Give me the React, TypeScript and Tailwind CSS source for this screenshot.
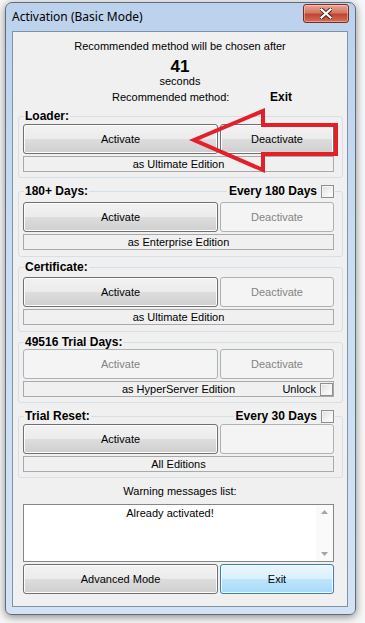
import type { ReactNode } from 'react';

const font = { fontFamily: '"Liberation Sans", Arial, sans-serif' };

type BtnKind = 'normal' | 'disabled' | 'focus';

function WinButton({ kind = 'normal', width, children }: { kind?: BtnKind; width: string; children?: ReactNode }) {
  const look =
    kind === 'disabled'
      ? 'border-[#adb2b5] bg-[#f4f4f4] text-[#838383]'
      : kind === 'focus'
        ? 'border-[#3c7fb1] bg-[linear-gradient(to_bottom,#eaf6fd_0%,#d9f0fc_50%,#bee6fd_50%,#a7d9f5_100%)] text-black shadow-[inset_0_0_0_1px_#f4fbfe]'
        : 'border-[#707070] bg-[linear-gradient(to_bottom,#f2f2f2_0%,#ebebeb_50%,#dddddd_50%,#cfcfcf_100%)] text-black shadow-[inset_0_0_0_1px_#fcfcfc]';
  return (
    <div className={`${width} h-[30px] flex items-center justify-center rounded-[3px] border text-[11px] ${look}`}>
      {children}
    </div>
  );
}

function CheckBox() {
  return (
    <div className="w-[13px] h-[13px] border border-[#8e8f8f] bg-[linear-gradient(135deg,#dcdcdc_0%,#f4f4f4_60%,#ffffff_100%)] shadow-[inset_0_0_0_1px_#f4f4f4]" />
  );
}

type GroupProps = {
  label: string;
  right?: string;
  top: string;
  pad: string;
  bottom: string;
  activate: BtnKind;
  deactivate: BtnKind;
  deactivateText?: string;
  edition: string;
  unlock?: boolean;
};

function Group({ label, right, top, pad, bottom, activate, deactivate, deactivateText = 'Deactivate', edition, unlock }: GroupProps) {
  return (
    <div className={`ml-[5px] w-[325px] ${top}`}>
      <div className="relative z-10 flex items-center justify-between h-[14px] pl-[6px] pr-[8px]">
        <span className="bg-[#f0f0f0] px-[1px] text-[12px] font-bold leading-[14px]">{label}</span>
        {right && (
          <span className="flex items-center gap-[4px] bg-[#f0f0f0] pl-[2px] pr-[1px]">
            <span className="text-[12px] font-bold leading-[14px]">{right}</span>
            <CheckBox />
          </span>
        )}
      </div>
      <div className={`-mt-[7px] border border-[#d5dfe5] rounded-[3px] pl-[4px] ${pad} ${bottom}`}>
        <div className="flex gap-[2px] w-[311px]">
          <WinButton kind={activate} width="w-[195px]">
            Activate
          </WinButton>
          <WinButton kind={deactivate} width="w-[114px]">
            {deactivateText}
          </WinButton>
        </div>
        <div className="mt-[2px] w-[311px] h-[16px] border border-[#a9a9a9] grid grid-cols-[1fr_auto_1fr] items-center text-[11px] leading-[13px]">
          <span />
          <span>{edition}</span>
          <span className="flex justify-end items-center gap-[4px] pr-[0px]">
            {unlock && (
              <>
                <span>Unlock</span>
                <CheckBox />
              </>
            )}
          </span>
        </div>
      </div>
    </div>
  );
}

export default function App() {
  return (
    <div className="relative w-[365px] h-[623px] bg-[#f7f7f7] overflow-hidden" style={font}>
      <div className="pl-[5px] pt-[2px]">
        <div className="w-[351px] h-[613px] flex flex-col rounded-t-[7px] rounded-b-[6px] border border-[#5f6d7e] bg-[linear-gradient(to_bottom,#bcd2ec_0%,#c9dcf1_40%,#d3e3f4_100%)] shadow-[0_2px_9px_rgba(0,0,0,0.45)]">
          {/* title bar */}
          <div className="h-[28px] flex items-start justify-between">
            <span className="pl-[6px] pt-[6px] text-[12px] leading-[16px] text-black" style={{ fontFamily: '"Noto Sans", "Open Sans", sans-serif' }}>
              Activation (Basic Mode)
            </span>
            <div className="mr-[6px] mt-[1px] w-[46px] h-[19px] rounded-[3px] border border-[#7a2a22] bg-[linear-gradient(to_bottom,#e8a695_0%,#d47764_45%,#c24430_55%,#d2715a_100%)] flex items-center justify-center shadow-[inset_0_0_0_1px_rgba(255,255,255,0.35)]">
              <svg width="12" height="11" viewBox="0 0 12 11">
                <path d="M1.5 1.5 L10.5 9.5 M10.5 1.5 L1.5 9.5" stroke="#4a1a14" strokeWidth="4" strokeLinecap="square" />
                <path d="M1.5 1.5 L10.5 9.5 M10.5 1.5 L1.5 9.5" stroke="#ffffff" strokeWidth="2.2" strokeLinecap="square" />
              </svg>
            </div>
          </div>

          {/* client area */}
          <div className="ml-[6px] w-[336px] h-[576px] border border-[#8092a8] bg-[#f0f0f0] flex flex-col text-black">
            <div className="pt-[8px] text-center text-[11px] leading-[13px]">Recommended method will be chosen after</div>
            <div className="mt-[6px] text-center text-[17px] font-bold leading-[16px]">41</div>
            <div className="text-center text-[11px] leading-[13px]">seconds</div>
            <div className="mt-[3px] flex pl-[99px] text-[11px] leading-[13px]">
              <span className="w-[158px]">Recommended method:</span>
              <span className="text-[12px] font-bold">Exit</span>
            </div>

            <Group label="Loader:" top="mt-[5px]" pad="pt-[7px]" bottom="pb-[5px]" activate="normal" deactivate="normal" edition="as Ultimate Edition" />
            <Group label="180+ Days:" right="Every 180 Days" top="mt-[6px]" pad="pt-[10px]" bottom="pb-[6px]" activate="normal" deactivate="disabled" edition="as Enterprise Edition" />
            <Group label="Certificate:" top="mt-[3px]" pad="pt-[9px]" bottom="pb-[6px]" activate="normal" deactivate="disabled" edition="as Ultimate Edition" />
            <Group label="49516 Trial Days:" top="mt-[3px]" pad="pt-[6px]" bottom="pb-[5px]" activate="disabled" deactivate="disabled" edition="as HyperServer Edition" unlock />
            <Group label="Trial Reset:" right="Every 30 Days" top="mt-[6px]" pad="pt-[7px]" bottom="pb-[5px]" activate="normal" deactivate="disabled" deactivateText="" edition="All Editions" />

            <div className="mt-[7px] text-center text-[11px] leading-[13px]">Warning messages list:</div>
            <div className="mt-[6px] ml-[10px] w-[311px] h-[58px] border border-[#828790] bg-white flex">
              <div className="flex-1 pt-[2px] text-center text-[11px] leading-[13px]">Already activated!</div>
              <div className="w-[17px] bg-[#fafafa] flex flex-col items-center justify-between py-[5px]">
                <svg width="7" height="4" viewBox="0 0 7 4">
                  <path d="M0 4 L3.5 0 L7 4 Z" fill="#a3a3a3" />
                </svg>
                <svg width="7" height="4" viewBox="0 0 7 4">
                  <path d="M0 0 L7 0 L3.5 4 Z" fill="#a3a3a3" />
                </svg>
              </div>
            </div>

            <div className="mt-[2px] ml-[10px] flex gap-[2px] w-[311px]">
              <WinButton width="w-[195px]">Advanced Mode</WinButton>
              <WinButton kind="focus" width="w-[114px]">
                Exit
              </WinButton>
            </div>
          </div>
        </div>
      </div>

      {/* red annotation arrow */}
      <svg className="absolute left-0 top-0 pointer-events-none" width="365" height="623" viewBox="0 0 365 623">
        <polygon
          points="194,140 263,111 263,125 336,125 336,154 263,154 263,170"
          fill="none"
          stroke="#e3202a"
          strokeWidth="4"
          strokeLinejoin="miter"
        />
      </svg>
    </div>
  );
}
